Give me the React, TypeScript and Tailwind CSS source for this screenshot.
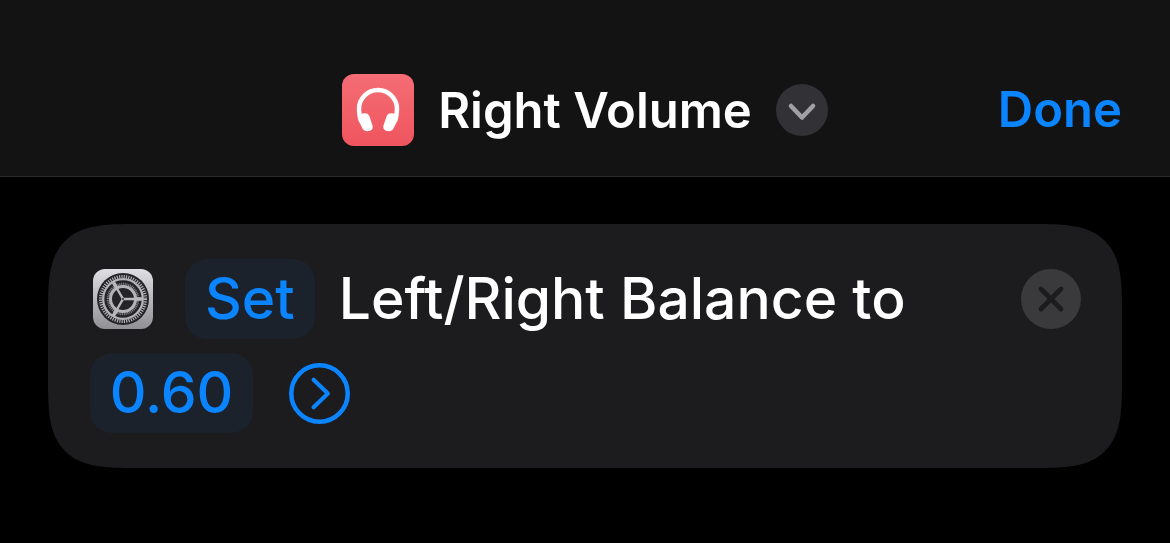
import React, { useState } from 'react';

const HeadphonesIcon: React.FC = () => (
  <svg viewBox="0 0 72 72" className="w-[72px] h-[72px] shrink-0" aria-hidden="true">
    <defs>
      <linearGradient id="coral" x1="0" y1="0" x2="0" y2="1">
        <stop offset="0" stopColor="#f56d75" />
        <stop offset="1" stopColor="#ef555e" />
      </linearGradient>
    </defs>
    <rect width="72" height="72" rx="12" fill="url(#coral)" />
    <path
      d="M19 47C17.500 43 17 39 17 35A19 19 0 0 1 55 35C55 39 54.500 43 53 47"
      fill="none"
      stroke="#fff"
      strokeWidth="4.500"
    />
    <path
      d="M20.500 39.500C24 38.500 26.500 39.500 27.500 42.500L30.500 51.500C31.300 54.500 29.800 56.500 27 57C24 57.500 21.800 56.800 20.500 54.500L17 47.500C15.500 44 17 40.500 20.500 39.500Z"
      fill="#fff"
    />
    <path
      d="M51.500 39.500C48 38.500 45.500 39.500 44.500 42.500L41.500 51.500C40.700 54.500 42.200 56.500 45 57C48 57.500 50.200 56.800 51.500 54.500L55 47.500C56.500 44 55 40.500 51.500 39.500Z"
      fill="#fff"
    />
  </svg>
);

const SettingsIcon: React.FC = () => (
  <svg viewBox="0 0 60 60" className="ml-[3px] mr-2 w-[60px] h-[60px] shrink-0" aria-hidden="true">
    <defs>
      <linearGradient id="silver" x1="0" y1="0" x2="0" y2="1">
        <stop offset="0" stopColor="#dedee3" />
        <stop offset="1" stopColor="#909095" />
      </linearGradient>
    </defs>
    <rect width="60" height="60" rx="12" fill="url(#silver)" />
    <circle cx="30" cy="30" r="26" fill="#242426" />
    <circle cx="30" cy="30" r="22.300" fill="none" stroke="#b4b4b8" strokeWidth="3.400" strokeDasharray="1.168 1.168" />
    <circle cx="30" cy="30" r="19.800" fill="none" stroke="#b4b4b8" strokeWidth="2.200" />
    <circle cx="30" cy="30" r="15" fill="none" stroke="#8c8c90" strokeWidth="2.600" strokeDasharray="0.900 0.900" />
    <circle cx="30" cy="30" r="12.500" fill="none" stroke="#b4b4b8" strokeWidth="3" />
    <g stroke="#b9b9bd" strokeWidth="2.400" strokeLinecap="round">
      <path d="M30 30H49" />
      <path d="M30 30L20.500 13.500" />
      <path d="M30 30L20.500 46.500" />
    </g>
    <g stroke="#b9b9bd" strokeWidth="3.600" strokeLinecap="round">
      <path d="M43 30H48" />
      <path d="M23.500 18.700L21 14.400" />
      <path d="M23.500 41.300L21 45.600" />
    </g>
    <circle cx="30" cy="30" r="0.900" fill="#242426" />
  </svg>
);

const App: React.FC = () => {
  const [balance, setBalance] = useState('0.60');

  return (
    <div className="min-h-screen bg-black text-white font-['Inter',sans-serif]">
      <header className="grid grid-cols-[1fr_auto_1fr] items-center border-b border-[#2a2a2b] bg-[#131313] px-12 pt-[74px] pb-[30px]">
        <div className="col-start-2 flex items-center">
          <HeadphonesIcon />
          <h1 className="mx-6 pt-0.5 text-[49px] leading-[60px] font-semibold whitespace-nowrap">Right Volume</h1>
          <button
            aria-label="Shortcut options"
            className="flex w-[52px] h-[52px] items-center justify-center rounded-full bg-[#323236]"
          >
            <svg viewBox="0 0 52 52" className="w-full h-full" fill="none" aria-hidden="true">
              <path d="M15 22L26 33.500L37 22" stroke="#a0a0a6" strokeWidth="4.500" strokeLinecap="round" strokeLinejoin="round" />
            </svg>
          </button>
        </div>
        <button className="justify-self-end text-[49px] leading-[60px] font-semibold text-[#0a84ff]">Done</button>
      </header>

      <main className="px-12 pt-[47px] pb-12">
        <section className="flex items-start justify-between rounded-[58px] bg-[#1c1c1e] pl-[42px] pr-[41px] py-[35px] supports-[corner-shape:squircle]:rounded-[88px] supports-[corner-shape:squircle]:[corner-shape:superellipse(1.69)]">
          <div className="flex flex-1 flex-wrap items-center gap-x-6 gap-y-3.5 text-[57px] leading-[80px] font-medium">
            <SettingsIcon />
            <button className="h-20 rounded-[22px] bg-[#1b222c] px-5 text-[#0a84ff]">Set</button>
            <span className="whitespace-nowrap">Left/Right Balance to</span>
            <input
              aria-label="Balance"
              value={balance}
              onChange={(e) => setBalance(e.target.value)}
              className="h-20 w-[163px] rounded-[22px] bg-[#1b222c] text-center text-[#0a84ff] outline-none"
            />
            <button aria-label="Show more" className="ml-3 w-[61px] h-[61px] text-[#0a84ff]">
              <svg viewBox="0 0 62 62" className="w-full h-full" fill="none" stroke="currentColor" aria-hidden="true">
                <circle cx="31" cy="31" r="28.700" strokeWidth="4.600" />
                <path d="M25 17L39.500 31L25 45" strokeWidth="4.200" strokeLinecap="round" strokeLinejoin="round" />
              </svg>
            </button>
          </div>
          <button aria-label="Remove action" className="mt-2.5 w-[60px] h-[60px] shrink-0 rounded-full bg-[#3a3a3d]">
            <svg viewBox="0 0 60 60" className="w-full h-full" fill="none" aria-hidden="true">
              <path d="M20 20L40 40M40 20L20 40" stroke="#1c1c1e" strokeWidth="4.800" strokeLinecap="round" />
            </svg>
          </button>
        </section>
      </main>
    </div>
  );
};

export default App;
